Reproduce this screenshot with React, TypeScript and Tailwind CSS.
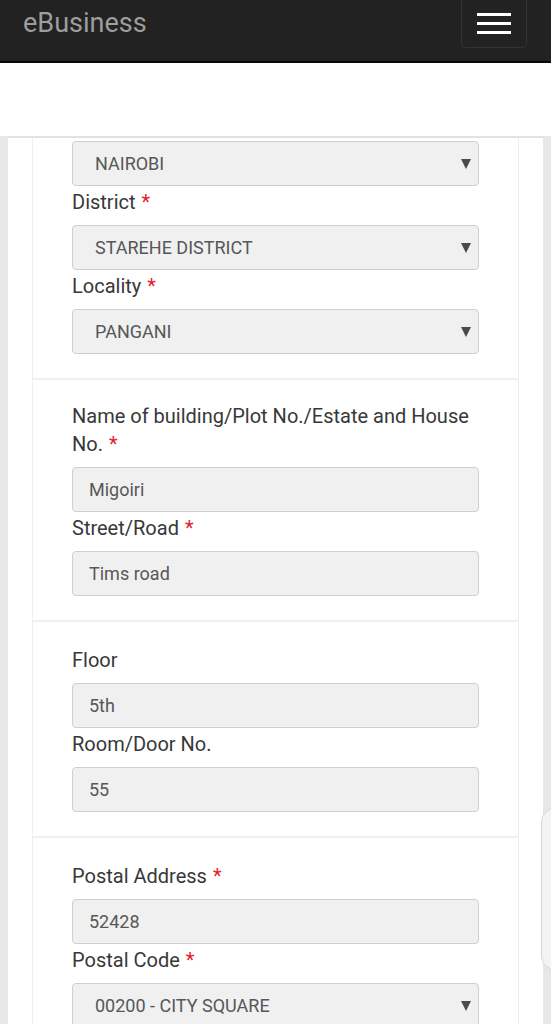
import React from "react";

type Field = {
  label: string;
  value: string;
  required?: boolean;
  select?: boolean;
};

const sections: Field[][] = [
  [
    { label: "", value: "NAIROBI", select: true },
    { label: "District", value: "STAREHE DISTRICT", required: true, select: true },
    { label: "Locality", value: "PANGANI", required: true, select: true },
  ],
  [
    { label: "Name of building/Plot No./Estate and House No.", value: "Migoiri", required: true },
    { label: "Street/Road", value: "Tims road", required: true },
  ],
  [
    { label: "Floor", value: "5th" },
    { label: "Room/Door No.", value: "55" },
  ],
  [
    { label: "Postal Address", value: "52428", required: true },
    { label: "Postal Code", value: "00200 - CITY SQUARE", required: true, select: true },
  ],
];

const sectionPad = ["pt-[3px]", "pt-[22px]", "pt-[24px]", "pt-[24px]"];

const FieldRow = ({ field, first }: { field: Field; first: boolean }) => (
  <div>
    {field.label && (
      <label className={`block text-[20px] leading-[28px] text-[#383838] mb-[9px] ${first ? "" : "mt-[2px]"}`}>
        {field.label}
        {field.required && <span className="text-[#e4202a] ml-[6px]">*</span>}
      </label>
    )}
    <div
      className={`flex items-center h-[45px] rounded-[4px] border border-[#cfcfcf] bg-[#f0f0f0] text-[18px] text-[#575757] ${
        field.select ? "pl-[22px] pr-[7px]" : "pl-[16px]"
      }`}
    >
      <span className="flex-1">{field.value}</span>
      {field.select && (
        <svg width="10" height="10" viewBox="0 0 10 10">
          <polygon points="0,0 10,0 5,10" fill="#4a4a4a" />
        </svg>
      )}
    </div>
  </div>
);

export default function App() {
  return (
    <div className="min-h-screen bg-[#e7e7e7] font-['Roboto',sans-serif] relative overflow-hidden">
      <nav className="h-[63px] bg-[#222] border-b-2 border-[#080808] flex items-start justify-between pl-[23px] pr-[24px]">
        <span className="text-[27px] leading-[46px] text-[#9d9d9d]">eBusiness</span>
        <button className="w-[66px] h-[58px] -mt-[10px] rounded-[5px] border border-[#333] flex flex-col items-center justify-center gap-[6px] pt-[8px]">
          <span className="block w-[34px] h-[3px] bg-white" />
          <span className="block w-[34px] h-[3px] bg-white" />
          <span className="block w-[34px] h-[3px] bg-white" />
        </button>
      </nav>
      <div className="h-[73px] bg-white" />
      <div className="mx-[8px] bg-white border-t-2 border-[#e2e2e2] pl-[24px] pr-[24px] min-h-[900px]">
        <div className="border-x border-[#eee]">
          {sections.map((fields, i) => (
            <div
              key={i}
              className={`border-b-2 border-[#f0f0f0] px-[39px] pb-[24px] ${sectionPad[i]}`}
            >
              {fields.map((f, j) => (
                <FieldRow key={j} field={f} first={j === 0} />
              ))}
            </div>
          ))}
        </div>
      </div>
      <div className="absolute left-[541px] top-[808px] w-[30px] h-[162px] rounded-l-[14px] border border-[#d8d8d8] bg-[#f3f3f3]" />
    </div>
  );
}
